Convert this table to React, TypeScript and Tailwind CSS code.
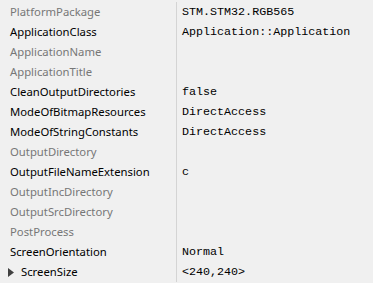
const rows: { name: string; value?: string; set?: boolean; expand?: boolean }[] = [
  { name: 'PlatformPackage', value: 'STM.STM32.RGB565' },
  { name: 'ApplicationClass', value: 'Application::Application', set: true },
  { name: 'ApplicationName' },
  { name: 'ApplicationTitle' },
  { name: 'CleanOutputDirectories', value: 'false', set: true },
  { name: 'ModeOfBitmapResources', value: 'DirectAccess', set: true },
  { name: 'ModeOfStringConstants', value: 'DirectAccess', set: true },
  { name: 'OutputDirectory' },
  { name: 'OutputFileNameExtension', value: 'c', set: true },
  { name: 'OutputIncDirectory' },
  { name: 'OutputSrcDirectory' },
  { name: 'PostProcess' },
  { name: 'ScreenOrientation', value: 'Normal', set: true },
  { name: 'ScreenSize', value: '<240,240>', set: true, expand: true },
]

export default function App() {
  return (
    <div className="h-[283px] w-[373px] overflow-hidden bg-[#f0f0f0] pt-[2px] font-['Noto_Sans',sans-serif]">
      {rows.map((r) => (
        <div key={r.name} className="grid h-5 grid-cols-[176px_1fr] items-center">
          <div
            className={`flex items-center text-[11.3px] leading-5 ${
              r.set ? 'text-[#000000]' : 'text-[#777777]'
            } ${r.expand ? 'pl-[8px]' : 'pl-[10px]'}`}
          >
            {r.expand && (
              <svg width="6" height="9" viewBox="0 0 6 9" className="mr-[7px]">
                <polygon points="0,0 6,4.5 0,9" fill="#404040" />
              </svg>
            )}
            {r.name}
          </div>
          <div className="h-5 border-l border-[#d4d4d4] pl-[5px] font-['Liberation_Mono',monospace] text-[11.7px] leading-5 text-[#000000]">
            {r.value}
          </div>
        </div>
      ))}
    </div>
  )
}
